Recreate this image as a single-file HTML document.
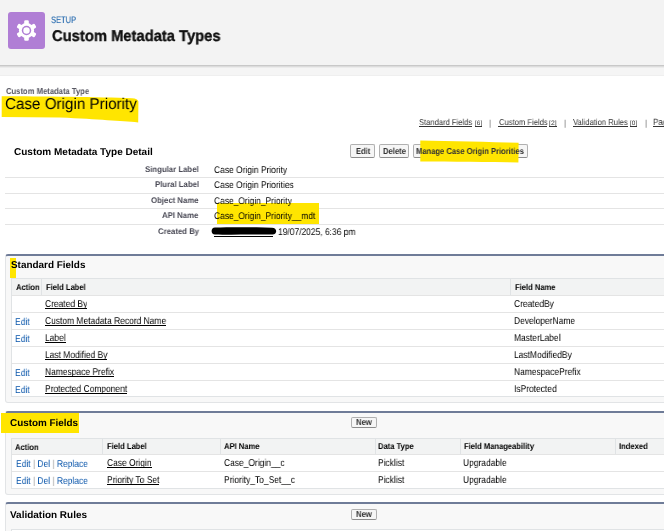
<!DOCTYPE html>
<html><head><meta charset="utf-8"><style>
html,body{margin:0;padding:0;width:664px;height:531px;overflow:hidden;background:#fff;position:relative;}
.a{position:absolute;}
.t{position:absolute;will-change:transform;text-rendering:geometricPrecision;white-space:nowrap;line-height:1;font-family:"Liberation Sans",sans-serif;}
.btn{position:absolute;border:1px solid #b0b0b0;border-bottom-color:#8c8c8c;border-radius:2px;background:#f6f6f6;}
.sec{position:absolute;box-sizing:border-box;background:#f8f8f8;border:1px solid #e2e4e6;border-top:2px solid #6f7c98;border-radius:3px;}
.tbl{position:absolute;box-sizing:border-box;background:#fff;border:1px solid #e0e3e5;}
</style></head><body>
<div class="a" style="left:0px;top:0px;width:664.00px;height:65.00px;background:#f3f3f3;"></div>
<div class="a" style="left:0px;top:65px;width:664.00px;height:1.00px;background:#c8c8c8;"></div>
<div class="a" style="left:0px;top:66px;width:664.00px;height:1.00px;background:#dcdcdc;"></div>
<div class="a" style="left:0px;top:67px;width:664.00px;height:1.00px;background:#ebebeb;"></div>
<div class="a" style="left:0px;top:68px;width:664.00px;height:7.00px;background:#f5f5f5;"></div>
<div class="a" style="left:0px;top:75px;width:664.00px;height:1.00px;background:#efefef;"></div>
<div class="a" style="left:8px;top:12px;width:37.00px;height:37.00px;background:#b07ed5;border-radius:3px;"></div>
<svg class="a" style="left:0px;top:0px" width="60" height="60" viewBox="0 0 60 60">
<g fill="#fff" transform="translate(26.5,30.5)">
<circle r="7.6"/>
<rect x="-2.3" y="-10.3" width="4.6" height="5" rx="1.3"/>
<rect x="-2.3" y="-10.3" width="4.6" height="5" rx="1.3" transform="rotate(60)"/>
<rect x="-2.3" y="-10.3" width="4.6" height="5" rx="1.3" transform="rotate(120)"/>
<rect x="-2.3" y="-10.3" width="4.6" height="5" rx="1.3" transform="rotate(180)"/>
<rect x="-2.3" y="-10.3" width="4.6" height="5" rx="1.3" transform="rotate(240)"/>
<rect x="-2.3" y="-10.3" width="4.6" height="5" rx="1.3" transform="rotate(300)"/>
<circle r="4.7" fill="#b07ed5"/><circle r="3.2" fill="#fff"/>
</g></svg>
<div class="t" style="left:51.00px;top:15px;font-size:9.400px;color:#2a6db0;transform:scaleX(0.8041);transform-origin:0 0;-webkit-text-stroke:0.15px #2a6db0;">SETUP</div>
<div class="t" style="left:51.60px;top:29px;font-size:15.600px;color:#111;font-weight:bold;transform:scaleX(0.9463);transform-origin:0 0;-webkit-text-stroke:0.35px #111;">Custom Metadata Types</div>
<svg class="a" style="left:0;top:90px" width="150" height="40" viewBox="0 90 150 40">
<path d="M1.7,96.3 C40,96.4 100,97 132,98.3 Q137.8,98.6 138.4,101.5 L138.2,122.4 C120,121.2 100,119.4 60,117.6 L1.7,117.1 Z" fill="#ffe500"/></svg>
<div class="t" style="left:6.00px;top:87px;font-size:8.724px;color:#575762;font-weight:bold;transform:scaleX(0.8772);transform-origin:0 0;">Custom Metadata Type</div>
<div class="t" style="left:5.20px;top:97px;font-size:15.672px;color:#000;transform:scaleX(0.9709);transform-origin:0 0;">Case Origin Priority</div>
<div class="t" style="left:419.00px;top:118px;font-size:8.507px;color:#333;transform:scaleX(0.8929);transform-origin:0 0;">Standard Fields</div>
<div class="a" style="left:419px;top:126px;width:53.00px;height:1.00px;background:#333;"></div>
<div class="t" style="left:474.60px;top:121px;font-size:6.400px;color:#333;transform:scaleX(1.0119);transform-origin:0 0;">[6]</div>
<div class="a" style="left:474.6px;top:126px;width:7.20px;height:1.00px;background:#333;"></div>
<div class="t" style="left:488.80px;top:119px;font-size:8.512px;color:#666;transform:scaleX(0.8929);transform-origin:0 0;">|</div>
<div class="t" style="left:498.50px;top:118px;font-size:8.552px;color:#333;transform:scaleX(0.8929);transform-origin:0 0;">Custom Fields</div>
<div class="a" style="left:498px;top:126px;width:49.00px;height:1.00px;background:#333;"></div>
<div class="t" style="left:549.30px;top:121px;font-size:6.400px;color:#333;transform:scaleX(1.0681);transform-origin:0 0;">[2]</div>
<div class="a" style="left:549.3px;top:126px;width:7.60px;height:1.00px;background:#333;"></div>
<div class="t" style="left:563.80px;top:119px;font-size:8.512px;color:#666;transform:scaleX(0.8929);transform-origin:0 0;">|</div>
<div class="t" style="left:572.70px;top:118px;font-size:8.581px;color:#333;transform:scaleX(0.8929);transform-origin:0 0;">Validation Rules</div>
<div class="a" style="left:573px;top:126px;width:55.00px;height:1.00px;background:#333;"></div>
<div class="t" style="left:629.90px;top:121px;font-size:6.400px;color:#333;transform:scaleX(1.0119);transform-origin:0 0;">[0]</div>
<div class="a" style="left:629.9px;top:126px;width:7.20px;height:1.00px;background:#333;"></div>
<div class="t" style="left:644.70px;top:119px;font-size:8.512px;color:#666;transform:scaleX(0.8929);transform-origin:0 0;">|</div>
<div class="t" style="left:653.40px;top:118px;font-size:9.083px;color:#333;transform:scaleX(0.8929);transform-origin:0 0;">Page Layouts</div>
<div class="a" style="left:653px;top:126px;width:50.00px;height:1.00px;background:#333;"></div>
<div class="t" style="left:14.30px;top:148px;font-size:10.019px;color:#000;font-weight:bold;">Custom Metadata Type Detail</div>
<div class="btn" style="left:350px;top:144px;width:23px;height:12px;"></div>
<div class="btn" style="left:379px;top:144px;width:28px;height:12px;"></div>
<div class="btn" style="left:413px;top:144px;width:113px;height:12px;"></div>
<svg class="a" style="left:410px;top:135px" width="120" height="32" viewBox="410 135 120 32">
<path d="M420.3,140.5 C450,141 490,142 518.6,142.8 L518.4,162.4 C490,162 450,161.6 420.3,161.4 Z" fill="#ffe500"/></svg>
<div class="t" style="left:355.90px;top:147px;font-size:8.646px;color:#333;font-weight:bold;transform:scaleX(0.8696);transform-origin:0 0;">Edit</div>
<div class="t" style="left:382.60px;top:147px;font-size:8.812px;color:#333;font-weight:bold;transform:scaleX(0.8696);transform-origin:0 0;">Delete</div>
<div class="t" style="left:416.20px;top:147px;font-size:8.730px;color:#333;font-weight:bold;transform:scaleX(0.8696);transform-origin:0 0;">Manage Case Origin Priorities</div>
<div class="a" style="left:5px;top:177px;width:659.00px;height:1.00px;background:#e4e4e4;"></div>
<div class="a" style="left:5px;top:193px;width:659.00px;height:1.00px;background:#e4e4e4;"></div>
<div class="a" style="left:5px;top:208px;width:659.00px;height:1.00px;background:#e4e4e4;"></div>
<div class="a" style="left:5px;top:224px;width:659.00px;height:1.00px;background:#e4e4e4;"></div>
<div class="a" style="left:217px;top:203.4px;width:102.00px;height:20.40px;background:#ffe500;"></div>
<div class="t" style="left:145.16px;top:165px;font-size:8.299px;color:#4a4a56;font-weight:bold;transform:scaleX(0.9398);transform-origin:0 0;">Singular Label</div>
<div class="t" style="left:213.70px;top:166px;font-size:9.717px;color:#000;transform:scaleX(0.8696);transform-origin:0 0;">Case Origin Priority</div>
<div class="t" style="left:154.69px;top:180px;font-size:8.299px;color:#4a4a56;font-weight:bold;transform:scaleX(0.9398);transform-origin:0 0;">Plural Label</div>
<div class="t" style="left:213.70px;top:181px;font-size:9.717px;color:#000;transform:scaleX(0.8696);transform-origin:0 0;">Case Origin Priorities</div>
<div class="t" style="left:151.22px;top:196px;font-size:8.299px;color:#4a4a56;font-weight:bold;transform:scaleX(0.9398);transform-origin:0 0;">Object Name</div>
<div class="t" style="left:213.70px;top:197px;font-size:9.717px;color:#000;transform:scaleX(0.8696);transform-origin:0 0;">Case_Origin_Priority</div>
<div class="t" style="left:162.49px;top:211px;font-size:8.299px;color:#4a4a56;font-weight:bold;transform:scaleX(0.9398);transform-origin:0 0;">API Name</div>
<div class="t" style="left:213.70px;top:212px;font-size:9.717px;color:#000;transform:scaleX(0.8696);transform-origin:0 0;">Case_Origin_Priority__mdt</div>
<div class="t" style="left:157.72px;top:227px;font-size:8.299px;color:#4a4a56;font-weight:bold;transform:scaleX(0.9398);transform-origin:0 0;">Created By</div>
<svg class="a" style="left:205px;top:220px" width="80" height="20" viewBox="205 220 80 20"><path d="M215,227.6 C230,227.2 255,227.2 272,227.8 C277.5,228 277.6,234.4 272.5,234.5 C255,234.2 230,234.8 215,234.6 C210.5,234.5 210.5,227.7 215,227.6 Z" fill="#000"/></svg>
<div class="a" style="left:214px;top:236px;width:58.50px;height:1.00px;background:#000;"></div>
<div class="t" style="left:277.60px;top:228px;font-size:9.717px;color:#000;transform:scaleX(0.8696);transform-origin:0 0;">19/07/2025, 6:36 pm</div>
<div class="sec" style="left:5px;top:254px;width:700px;height:148.5px;"></div>
<div class="sec" style="left:5px;top:411px;width:700px;height:84px;"></div>
<div class="sec" style="left:5px;top:502px;width:700px;height:98px;"></div>
<div class="a" style="left:9.9px;top:257.5px;width:6.20px;height:20.30px;background:#ffe500;"></div>
<div class="t" style="left:10.50px;top:261px;font-size:9.931px;color:#000;font-weight:bold;">Standard Fields</div>
<div class="tbl" style="left:11.3px;top:278.3px;width:700px;height:119px;"></div>
<div class="a" style="left:12.3px;top:279.3px;width:687.70px;height:16.20px;background:#f2f3f3;"></div>
<div class="a" style="left:41px;top:279.3px;width:1.00px;height:16.20px;background:#e0e3e5;"></div>
<div class="a" style="left:510px;top:279.3px;width:1.00px;height:16.20px;background:#e0e3e5;"></div>
<div class="a" style="left:12.3px;top:295.3px;width:687.70px;height:1.00px;background:#e4e4e4;"></div>
<div class="a" style="left:12.3px;top:312.2px;width:687.70px;height:1.00px;background:#e4e4e4;"></div>
<div class="a" style="left:12.3px;top:329.1px;width:687.70px;height:1.00px;background:#e4e4e4;"></div>
<div class="a" style="left:12.3px;top:346.1px;width:687.70px;height:1.00px;background:#e4e4e4;"></div>
<div class="a" style="left:12.3px;top:363px;width:687.70px;height:1.00px;background:#e4e4e4;"></div>
<div class="a" style="left:12.3px;top:380px;width:687.70px;height:1.00px;background:#e4e4e4;"></div>
<div class="t" style="left:15.50px;top:283px;font-size:8.512px;color:#000;font-weight:bold;transform:scaleX(0.8929);transform-origin:0 0;">Action</div>
<div class="t" style="left:45.60px;top:283px;font-size:8.512px;color:#000;font-weight:bold;transform:scaleX(0.8929);transform-origin:0 0;">Field Label</div>
<div class="t" style="left:514.90px;top:283px;font-size:8.512px;color:#000;font-weight:bold;transform:scaleX(0.8929);transform-origin:0 0;">Field Name</div>
<div class="t" style="left:44.90px;top:300px;font-size:9.971px;color:#000;transform:scaleX(0.8475);transform-origin:0 0;">Created By</div>
<div class="a" style="left:45px;top:308px;width:42.00px;height:1.00px;background:#000;"></div>
<div class="t" style="left:514.40px;top:300px;font-size:9.971px;color:#000;transform:scaleX(0.8475);transform-origin:0 0;">CreatedBy</div>
<div class="t" style="left:15.40px;top:318px;font-size:9.971px;color:#0a56ab;transform:scaleX(0.8475);transform-origin:0 0;">Edit</div>
<div class="t" style="left:44.90px;top:317px;font-size:9.971px;color:#000;transform:scaleX(0.8475);transform-origin:0 0;">Custom Metadata Record Name</div>
<div class="a" style="left:45px;top:325px;width:121.00px;height:1.00px;background:#000;"></div>
<div class="t" style="left:514.40px;top:317px;font-size:9.971px;color:#000;transform:scaleX(0.8475);transform-origin:0 0;">DeveloperName</div>
<div class="t" style="left:15.40px;top:335px;font-size:9.971px;color:#0a56ab;transform:scaleX(0.8475);transform-origin:0 0;">Edit</div>
<div class="t" style="left:44.90px;top:334px;font-size:9.971px;color:#000;transform:scaleX(0.8475);transform-origin:0 0;">Label</div>
<div class="a" style="left:45px;top:342px;width:21.00px;height:1.00px;background:#000;"></div>
<div class="t" style="left:514.40px;top:334px;font-size:9.971px;color:#000;transform:scaleX(0.8475);transform-origin:0 0;">MasterLabel</div>
<div class="t" style="left:44.90px;top:351px;font-size:9.971px;color:#000;transform:scaleX(0.8475);transform-origin:0 0;">Last Modified By</div>
<div class="a" style="left:45px;top:359px;width:62.00px;height:1.00px;background:#000;"></div>
<div class="t" style="left:514.40px;top:351px;font-size:9.971px;color:#000;transform:scaleX(0.8475);transform-origin:0 0;">LastModifiedBy</div>
<div class="t" style="left:15.40px;top:369px;font-size:9.971px;color:#0a56ab;transform:scaleX(0.8475);transform-origin:0 0;">Edit</div>
<div class="t" style="left:44.90px;top:368px;font-size:9.971px;color:#000;transform:scaleX(0.8475);transform-origin:0 0;">Namespace Prefix</div>
<div class="a" style="left:45px;top:376px;width:69.00px;height:1.00px;background:#000;"></div>
<div class="t" style="left:514.40px;top:368px;font-size:9.971px;color:#000;transform:scaleX(0.8475);transform-origin:0 0;">NamespacePrefix</div>
<div class="t" style="left:15.40px;top:386px;font-size:9.971px;color:#0a56ab;transform:scaleX(0.8475);transform-origin:0 0;">Edit</div>
<div class="t" style="left:44.90px;top:385px;font-size:9.971px;color:#000;transform:scaleX(0.8475);transform-origin:0 0;">Protected Component</div>
<div class="a" style="left:45px;top:393px;width:82.00px;height:1.00px;background:#000;"></div>
<div class="t" style="left:514.40px;top:385px;font-size:9.971px;color:#000;transform:scaleX(0.8475);transform-origin:0 0;">IsProtected</div>
<div class="a" style="left:0.8px;top:413px;width:78.60px;height:20.00px;background:#ffe500;"></div>
<div class="t" style="left:10.20px;top:419px;font-size:9.884px;color:#000;font-weight:bold;">Custom Fields</div>
<div class="btn" style="left:351px;top:417px;width:24px;height:9px;"></div>
<div class="t" style="left:356.10px;top:418px;font-size:8.893px;color:#333;font-weight:bold;transform:scaleX(0.8696);transform-origin:0 0;">New</div>
<div class="tbl" style="left:11.3px;top:437.5px;width:700px;height:51px;"></div>
<div class="a" style="left:12.3px;top:438.5px;width:687.70px;height:15.80px;background:#f2f3f3;"></div>
<div class="a" style="left:102.4px;top:438.5px;width:1.00px;height:15.80px;background:#e0e3e5;"></div>
<div class="a" style="left:219.6px;top:438.5px;width:1.00px;height:15.80px;background:#e0e3e5;"></div>
<div class="a" style="left:374.8px;top:438.5px;width:1.00px;height:15.80px;background:#e0e3e5;"></div>
<div class="a" style="left:459.8px;top:438.5px;width:1.00px;height:15.80px;background:#e0e3e5;"></div>
<div class="a" style="left:614.5px;top:438.5px;width:1.00px;height:15.80px;background:#e0e3e5;"></div>
<div class="a" style="left:12.3px;top:454px;width:687.70px;height:1.00px;background:#e4e4e4;"></div>
<div class="a" style="left:12.3px;top:471px;width:687.70px;height:1.00px;background:#e4e4e4;"></div>
<div class="t" style="left:15.20px;top:443px;font-size:8.512px;color:#000;font-weight:bold;transform:scaleX(0.8929);transform-origin:0 0;">Action</div>
<div class="t" style="left:107.40px;top:442px;font-size:8.512px;color:#000;font-weight:bold;transform:scaleX(0.8929);transform-origin:0 0;">Field Label</div>
<div class="t" style="left:223.70px;top:442px;font-size:8.512px;color:#000;font-weight:bold;transform:scaleX(0.8929);transform-origin:0 0;">API Name</div>
<div class="t" style="left:378.20px;top:442px;font-size:8.512px;color:#000;font-weight:bold;transform:scaleX(0.8929);transform-origin:0 0;">Data Type</div>
<div class="t" style="left:463.80px;top:442px;font-size:8.512px;color:#000;font-weight:bold;transform:scaleX(0.8929);transform-origin:0 0;">Field Manageability</div>
<div class="t" style="left:618.50px;top:442px;font-size:8.512px;color:#000;font-weight:bold;transform:scaleX(0.8929);transform-origin:0 0;">Indexed</div>
<div class="t" style="left:15.60px;top:460px;font-size:9.954px;color:#0a56ab;transform:scaleX(0.8475);transform-origin:0 0;">Edit <span style="color:#9a9a9a">|</span> Del <span style="color:#9a9a9a">|</span> Replace</div>
<div class="t" style="left:106.90px;top:459px;font-size:9.971px;color:#000;transform:scaleX(0.8475);transform-origin:0 0;">Case Origin</div>
<div class="a" style="left:107px;top:467px;width:45.00px;height:1.00px;background:#000;"></div>
<div class="t" style="left:223.50px;top:459px;font-size:9.971px;color:#000;transform:scaleX(0.8475);transform-origin:0 0;">Case_Origin__c</div>
<div class="t" style="left:378.00px;top:459px;font-size:9.971px;color:#000;transform:scaleX(0.8475);transform-origin:0 0;">Picklist</div>
<div class="t" style="left:463.40px;top:459px;font-size:9.971px;color:#000;transform:scaleX(0.8475);transform-origin:0 0;">Upgradable</div>
<div class="t" style="left:15.60px;top:477px;font-size:9.954px;color:#0a56ab;transform:scaleX(0.8475);transform-origin:0 0;">Edit <span style="color:#9a9a9a">|</span> Del <span style="color:#9a9a9a">|</span> Replace</div>
<div class="t" style="left:106.90px;top:476px;font-size:9.971px;color:#000;transform:scaleX(0.8475);transform-origin:0 0;">Priority To Set</div>
<div class="a" style="left:107px;top:484px;width:52.00px;height:1.00px;background:#000;"></div>
<div class="t" style="left:223.50px;top:476px;font-size:9.971px;color:#000;transform:scaleX(0.8475);transform-origin:0 0;">Priority_To_Set__c</div>
<div class="t" style="left:378.00px;top:476px;font-size:9.971px;color:#000;transform:scaleX(0.8475);transform-origin:0 0;">Picklist</div>
<div class="t" style="left:463.40px;top:476px;font-size:9.971px;color:#000;transform:scaleX(0.8475);transform-origin:0 0;">Upgradable</div>
<div class="t" style="left:9.90px;top:511px;font-size:9.982px;color:#000;font-weight:bold;">Validation Rules</div>
<div class="btn" style="left:351px;top:509px;width:24px;height:9px;"></div>
<div class="t" style="left:356.10px;top:510px;font-size:8.893px;color:#333;font-weight:bold;transform:scaleX(0.8696);transform-origin:0 0;">New</div>
<div class="tbl" style="left:11.1px;top:529px;width:700px;height:50px;"></div>
</body></html>
